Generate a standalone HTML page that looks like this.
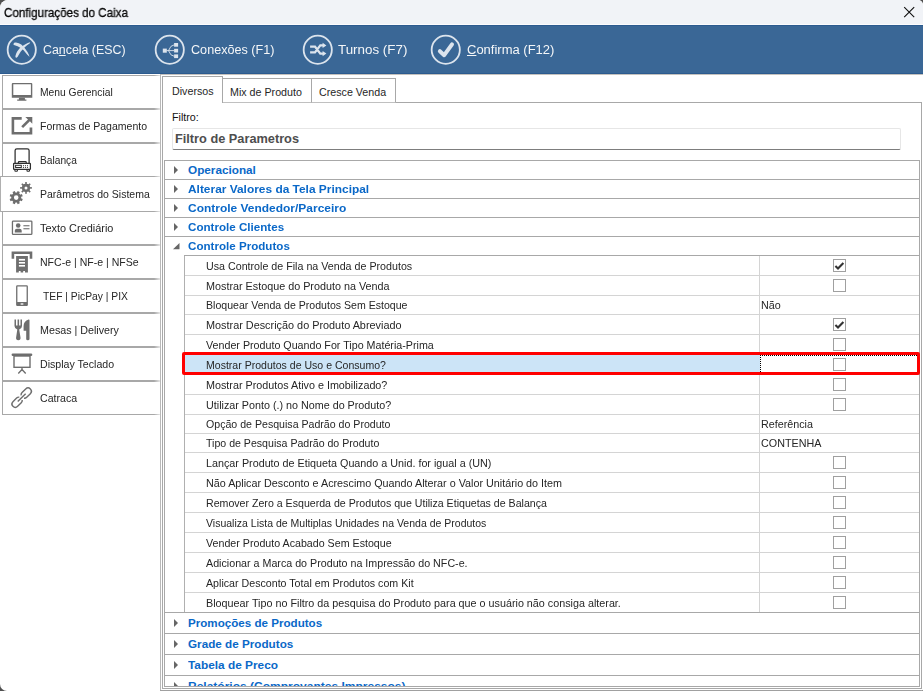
<!DOCTYPE html><html><head><meta charset="utf-8"><style>
*{margin:0;padding:0;box-sizing:border-box}
html,body{width:923px;height:691px;overflow:hidden;background:#505050}
body{font-family:"Liberation Sans",sans-serif;position:relative}
.a{position:absolute}
.t{position:absolute;white-space:nowrap;line-height:1}
#win{position:absolute;left:0;top:0;width:923px;height:691px;background:#fff;border-radius:8px 5px 2px 7px;overflow:hidden}
.hl{position:absolute;height:1px}
.vl{position:absolute;width:1px}
</style></head><body><div id="win">
<div class="a" style="left:0;top:0;width:923px;height:24px;background:#f1f3f7"></div>
<div class="hl" style="left:0;top:24px;width:923px;background:#fcfcfd"></div>
<div class="t" style="left:4px;top:7px;font-size:12.3px;color:#0a0a0a;transform:scaleX(0.944);transform-origin:0 0;will-change:transform;-webkit-text-stroke:0.3px #000">Configurações do Caixa</div>
<svg class="a" style="left:903px;top:6px" width="13" height="13" viewBox="0 0 13 13"><path d="M1.2 1.2L11.2 11.2M11.2 1.2L1.2 11.2" stroke="#111" stroke-width="1.1"/></svg>
<div class="a" style="left:0;top:25px;width:923px;height:49px;background:#3a6796;border-top:1px solid #2c5b8f;border-bottom:1px solid #2c5b8f"></div>
<svg class="a" style="left:0;top:0" width="480" height="75" viewBox="0 0 480 75">
<circle cx="21.75" cy="49.75" r="14.1" fill="none" stroke="#dce4ed" stroke-width="1.8"/>
<path fill="#dce4ed" d="M13.5 44Q13.6 42.5 16 42.6Q19 42.9 21.3 44.6Q24.5 47.5 27.5 52Q29 54.5 29.5 57Q28.5 55.8 27.3 54.8Q25.5 52.5 23.6 50.2Q20.8 47.9 17.6 46.3Q15 45.5 14 45.1Q13.4 44.8 13.5 44Z"/>
<path fill="#dce4ed" d="M30.1 42.3Q27.5 43 25.9 44Q23.5 45 21.7 46.5Q19.8 48 18.5 49.7Q17 51.5 16.2 53.4Q15.3 55.5 15.4 56.8Q15.6 58 16.9 57.6Q18 56.5 18.5 55.3Q19.5 53.5 20.8 51.6Q22.5 49.3 24.5 47.4Q27 45.2 29.6 43.5Q30.4 42.6 30.1 42.3Z"/>
<circle cx="169.75" cy="49.75" r="14.1" fill="none" stroke="#dce4ed" stroke-width="1.8"/>
<g fill="#dce4ed"><rect x="162.8" y="48.6" width="4" height="4.1"/><rect x="174.1" y="43" width="4" height="3.7"/><rect x="174.1" y="48.8" width="4" height="3.7"/><rect x="174.1" y="54.4" width="4" height="3.7"/></g>
<path d="M166.5 50.6H174.3M168.5 50.6Q170.5 45 174.3 44.8M168.5 50.6Q170.5 56.2 174.3 56.3" fill="none" stroke="#dce4ed" stroke-width="0.9"/>
<circle cx="317.75" cy="49.75" r="14.1" fill="none" stroke="#dce4ed" stroke-width="1.8"/>
<path d="M310.1 46.6H315L320.3 53.6H323.5M310.1 52.4H315L320.3 45.4H323.5" fill="none" stroke="#dce4ed" stroke-width="2.3"/>
<path d="M322.6 42.7L326.4 45.4L322.6 48.1ZM322.6 50.9L326.4 53.6L322.6 56.3Z" fill="#dce4ed"/>
<circle cx="445.75" cy="49.75" r="14.1" fill="none" stroke="#dce4ed" stroke-width="1.8"/>
<path d="M439.9 51.2L444.2 55.2L452 44.3" fill="none" stroke="#dce4ed" stroke-width="4" stroke-linecap="round" stroke-linejoin="round"/>
</svg>
<div class="t" style="left:42.5px;top:44px;font-size:12.5px;color:#f4f6f8;transform:scaleX(0.99);transform-origin:0 0">Ca<u>n</u>cela (ESC)</div>
<div class="t" style="left:190.5px;top:44px;font-size:12.5px;color:#f4f6f8;transform:scaleX(1.01);transform-origin:0 0">Conexões (F1)</div>
<div class="t" style="left:338px;top:44px;font-size:12.5px;color:#f4f6f8;transform:scaleX(1.07);transform-origin:0 0">Turnos (F7)</div>
<div class="t" style="left:466.5px;top:44px;font-size:12.5px;color:#f4f6f8;transform:scaleX(1.04);transform-origin:0 0"><u>C</u>onfirma (F12)</div>
<div class="hl" style="left:160px;top:74px;width:763px;background:#c4c1bd"></div>
<div class="vl" style="left:160px;top:74px;height:617px;background:#b8b8b8"></div>
<div class="hl" style="left:2px;top:75px;width:158px;background:linear-gradient(90deg,#a8a8a8 152px,#e6e6e6 158px)"></div>
<div class="hl" style="left:2px;top:108px;width:158px;background:linear-gradient(90deg,#a8a8a8 152px,#e6e6e6 158px)"></div>
<div class="vl" style="left:2px;top:75px;height:34px;background:#a8a8a8"></div>
<div class="hl" style="left:2px;top:109px;width:158px;background:linear-gradient(90deg,#a8a8a8 152px,#e6e6e6 158px)"></div>
<div class="hl" style="left:2px;top:142px;width:158px;background:linear-gradient(90deg,#a8a8a8 152px,#e6e6e6 158px)"></div>
<div class="vl" style="left:2px;top:109px;height:34px;background:#a8a8a8"></div>
<div class="hl" style="left:2px;top:143px;width:158px;background:linear-gradient(90deg,#a8a8a8 152px,#e6e6e6 158px)"></div>
<div class="hl" style="left:2px;top:176px;width:158px;background:linear-gradient(90deg,#a8a8a8 152px,#e6e6e6 158px)"></div>
<div class="vl" style="left:2px;top:143px;height:34px;background:#a8a8a8"></div>
<div class="hl" style="left:2px;top:211px;width:158px;background:linear-gradient(90deg,#a8a8a8 152px,#e6e6e6 158px)"></div>
<div class="hl" style="left:2px;top:244px;width:158px;background:linear-gradient(90deg,#a8a8a8 152px,#e6e6e6 158px)"></div>
<div class="vl" style="left:2px;top:211px;height:34px;background:#a8a8a8"></div>
<div class="hl" style="left:2px;top:245px;width:158px;background:linear-gradient(90deg,#a8a8a8 152px,#e6e6e6 158px)"></div>
<div class="hl" style="left:2px;top:278px;width:158px;background:linear-gradient(90deg,#a8a8a8 152px,#e6e6e6 158px)"></div>
<div class="vl" style="left:2px;top:245px;height:34px;background:#a8a8a8"></div>
<div class="hl" style="left:2px;top:279px;width:158px;background:linear-gradient(90deg,#a8a8a8 152px,#e6e6e6 158px)"></div>
<div class="hl" style="left:2px;top:312px;width:158px;background:linear-gradient(90deg,#a8a8a8 152px,#e6e6e6 158px)"></div>
<div class="vl" style="left:2px;top:279px;height:34px;background:#a8a8a8"></div>
<div class="hl" style="left:2px;top:313px;width:158px;background:linear-gradient(90deg,#a8a8a8 152px,#e6e6e6 158px)"></div>
<div class="hl" style="left:2px;top:346px;width:158px;background:linear-gradient(90deg,#a8a8a8 152px,#e6e6e6 158px)"></div>
<div class="vl" style="left:2px;top:313px;height:34px;background:#a8a8a8"></div>
<div class="hl" style="left:2px;top:347px;width:158px;background:linear-gradient(90deg,#a8a8a8 152px,#e6e6e6 158px)"></div>
<div class="hl" style="left:2px;top:380px;width:158px;background:linear-gradient(90deg,#a8a8a8 152px,#e6e6e6 158px)"></div>
<div class="vl" style="left:2px;top:347px;height:34px;background:#a8a8a8"></div>
<div class="hl" style="left:2px;top:381px;width:158px;background:linear-gradient(90deg,#a8a8a8 152px,#e6e6e6 158px)"></div>
<div class="hl" style="left:2px;top:414px;width:158px;background:linear-gradient(90deg,#a8a8a8 152px,#e6e6e6 158px)"></div>
<div class="vl" style="left:2px;top:381px;height:34px;background:#a8a8a8"></div>
<div class="t" style="left:40px;top:88px;font-size:10.3px;color:#262626;transform:scaleX(1.0);transform-origin:0 0">Menu Gerencial</div>
<div class="t" style="left:40px;top:122px;font-size:10.3px;color:#262626;transform:scaleX(1.022);transform-origin:0 0">Formas de Pagamento</div>
<div class="t" style="left:40px;top:156px;font-size:10.3px;color:#262626;transform:scaleX(0.99);transform-origin:0 0">Balança</div>
<div class="a" style="left:0;top:176px;width:160px;height:36px;background:#fff"></div>
<div class="hl" style="left:0;top:176px;width:160px;background:linear-gradient(90deg,#a8a8a8 154px,#e6e6e6 160px)"></div>
<div class="hl" style="left:0;top:211px;width:160px;background:linear-gradient(90deg,#a8a8a8 154px,#e6e6e6 160px)"></div>
<div class="vl" style="left:0;top:176px;height:36px;background:#b0b0b0"></div>
<div class="t" style="left:40px;top:190px;font-size:10.3px;color:#262626;transform:scaleX(1.02);transform-origin:0 0">Parâmetros do Sistema</div>
<div class="t" style="left:40px;top:224px;font-size:10.3px;color:#262626;transform:scaleX(1.06);transform-origin:0 0">Texto Crediário</div>
<div class="t" style="left:40px;top:258px;font-size:10.3px;color:#262626;transform:scaleX(1.025);transform-origin:0 0">NFC-e | NF-e | NFSe</div>
<div class="t" style="left:43px;top:292px;font-size:10.3px;color:#262626;transform:scaleX(1.0);transform-origin:0 0">TEF | PicPay | PIX</div>
<div class="t" style="left:40px;top:326px;font-size:10.3px;color:#262626;transform:scaleX(1.04);transform-origin:0 0">Mesas | Delivery</div>
<div class="t" style="left:40px;top:360px;font-size:10.3px;color:#262626;transform:scaleX(1.03);transform-origin:0 0">Display Teclado</div>
<div class="t" style="left:40px;top:394px;font-size:10.3px;color:#262626;transform:scaleX(1.03);transform-origin:0 0">Catraca</div>
<svg class="a" style="left:0;top:0" width="160" height="420" viewBox="0 0 160 420">
<g fill="#6e6e6e">
<path fill-rule="evenodd" d="M12.8 83h18.5q1 0 1 1v13.8h-20.5v-13.8q0-1 1-1zM13.3 84.3v10.8h17.6v-10.8z"/>
<path d="M18.9 97.7h6v1.9h1.5v1.2h-9.2v-1.2h1.7z"/>
<path d="M11.6 117.1h10.1v2.6h-7.5v12.3h15.4v-4.6h2.7v7.2h-20.7z"/>
<path d="M25.3 117.1h7v6.6l-2.4-2.4l-6.8 6.8l-1.9-1.9l6.8-6.8z"/>
</g>
<g fill="none" stroke="#2e2e2e" stroke-width="1.25">
<path d="M15.1 163.3v-12.7q0-1.8 1.8-1.8h10.4q1.8 0 1.8 1.8v12.7"/>
<path d="M18.4 163.2v-1q0-0.7 0.7-0.7h6.4q0.7 0 0.7 0.7v1"/>
<rect x="13.6" y="163.4" width="16.8" height="6" rx="0.6"/>
<rect x="15.6" y="165.3" width="5.7" height="2.2" stroke-width="1"/>
<path d="M14.9 169.6v1.1q0 0.6 0.6 0.6h1.3q0.6 0 0.6-0.6v-1.1M27 169.6v1.1q0 0.6 0.6 0.6h1.3q0.6 0 0.6-0.6v-1.1" stroke-width="1.1"/>
</g>
<g fill="#2e2e2e"><circle cx="23.4" cy="165.6" r="0.55"/><circle cx="25.4" cy="165.6" r="0.55"/><circle cx="27.4" cy="165.6" r="0.55"/><circle cx="23.4" cy="167.4" r="0.55"/><circle cx="25.4" cy="167.4" r="0.55"/><circle cx="27.4" cy="167.4" r="0.55"/></g>
<path fill="#6e6e6e" fill-rule="evenodd" d="M21.2,197.6A5.0,5.0 0 1 0 11.2,197.6A5.0,5.0 0 1 0 21.2,197.6ZM18.5,197.6A2.3,2.3 0 1 1 13.899999999999999,197.6A2.3,2.3 0 1 1 18.5,197.6Z"/><rect x="-1.2" y="-6.6" width="2.4" height="2.3999999999999995" fill="#6e6e6e" transform="translate(16.2 197.6) rotate(22.5)"/><rect x="-1.2" y="-6.6" width="2.4" height="2.3999999999999995" fill="#6e6e6e" transform="translate(16.2 197.6) rotate(67.5)"/><rect x="-1.2" y="-6.6" width="2.4" height="2.3999999999999995" fill="#6e6e6e" transform="translate(16.2 197.6) rotate(112.5)"/><rect x="-1.2" y="-6.6" width="2.4" height="2.3999999999999995" fill="#6e6e6e" transform="translate(16.2 197.6) rotate(157.5)"/><rect x="-1.2" y="-6.6" width="2.4" height="2.3999999999999995" fill="#6e6e6e" transform="translate(16.2 197.6) rotate(202.5)"/><rect x="-1.2" y="-6.6" width="2.4" height="2.3999999999999995" fill="#6e6e6e" transform="translate(16.2 197.6) rotate(247.5)"/><rect x="-1.2" y="-6.6" width="2.4" height="2.3999999999999995" fill="#6e6e6e" transform="translate(16.2 197.6) rotate(292.5)"/><rect x="-1.2" y="-6.6" width="2.4" height="2.3999999999999995" fill="#6e6e6e" transform="translate(16.2 197.6) rotate(337.5)"/>
<path fill="#6e6e6e" fill-rule="evenodd" d="M30.1,187.9A4.1,4.1 0 1 0 21.9,187.9A4.1,4.1 0 1 0 30.1,187.9ZM27.5,187.9A1.5,1.5 0 1 1 24.5,187.9A1.5,1.5 0 1 1 27.5,187.9Z"/><rect x="-0.8" y="-5.9" width="1.6" height="2.6000000000000005" fill="#6e6e6e" transform="translate(26.0 187.9) rotate(0.0)"/><rect x="-0.8" y="-5.9" width="1.6" height="2.6000000000000005" fill="#6e6e6e" transform="translate(26.0 187.9) rotate(45.0)"/><rect x="-0.8" y="-5.9" width="1.6" height="2.6000000000000005" fill="#6e6e6e" transform="translate(26.0 187.9) rotate(90.0)"/><rect x="-0.8" y="-5.9" width="1.6" height="2.6000000000000005" fill="#6e6e6e" transform="translate(26.0 187.9) rotate(135.0)"/><rect x="-0.8" y="-5.9" width="1.6" height="2.6000000000000005" fill="#6e6e6e" transform="translate(26.0 187.9) rotate(180.0)"/><rect x="-0.8" y="-5.9" width="1.6" height="2.6000000000000005" fill="#6e6e6e" transform="translate(26.0 187.9) rotate(225.0)"/><rect x="-0.8" y="-5.9" width="1.6" height="2.6000000000000005" fill="#6e6e6e" transform="translate(26.0 187.9) rotate(270.0)"/><rect x="-0.8" y="-5.9" width="1.6" height="2.6000000000000005" fill="#6e6e6e" transform="translate(26.0 187.9) rotate(315.0)"/>
<rect x="12.45" y="221.05" width="19.4" height="13.4" rx="0.8" fill="none" stroke="#6e6e6e" stroke-width="1.3"/>
<circle cx="18.2" cy="225.5" r="2.3" fill="#6e6e6e"/>
<path d="M14.8 232.4v-1.6q0-2 2-2h2.9q2 0 2 2v1.6z" fill="#6e6e6e"/>
<rect x="23.4" y="225.2" width="6.1" height="1.1" fill="#6e6e6e"/>
<rect x="23.4" y="228.2" width="6.1" height="1.1" fill="#6e6e6e"/>
<path d="M11.6 251.4h20.7v7.3h-2.6v-4.8h-15.5v4.8h-2.6z" fill="#6e6e6e"/>
<path d="M16.1 256.1h11.8v16.4h-2.9v-1.5h-1.8v1.5h-2.6v-1.5h-1.8v1.5h-2.7z" fill="#6e6e6e"/>
<g fill="#fff"><rect x="18.9" y="258.9" width="6.1" height="1.7"/><rect x="18.9" y="262" width="6.1" height="1.6"/><rect x="18.9" y="265" width="6.1" height="1.6"/></g>
<path fill="#6e6e6e" fill-rule="evenodd" d="M17.3 285.2h9.4q1.2 0 1.2 1.2v18.3q0 1.2-1.2 1.2h-9.4q-1.2 0-1.2-1.2v-18.3q0-1.2 1.2-1.2zM17.4 286.5v15.5h9.2v-15.5z"/>
<ellipse cx="22" cy="304.1" rx="1.7" ry="0.75" fill="#fff"/>
<path fill="#6e6e6e" d="M14.5 319.6H16V325.6H17.55V319.6H19.1V325.6H20.5V319.6H22V326Q22 328.6 19.2 329.6L20.5 337.5Q20.8 340.3 18.3 340.3Q15.8 340.3 16.1 337.5L17.3 329.6Q14.5 328.6 14.5 326Z"/>
<path fill="#6e6e6e" d="M29.5 320.3V339Q29.5 340.3 27.8 340.3Q26.2 340.3 26.2 339V330.7H23.6V326Q23.6 321.5 28.6 319.6Q29.5 319.4 29.5 320.3Z"/>
<path fill="#6e6e6e" d="M12.8 353.6h18.3q1.2 0 1.2 1.25q0 1.25-1.2 1.25h-18.3q-1.2 0-1.2-1.25q0-1.25 1.2-1.25z"/>
<rect x="14" y="356" width="16" height="11.3" fill="none" stroke="#6e6e6e" stroke-width="1.4"/>
<path d="M22 367.5v2.4M22 369.5l-3.7 4M22 369.5l3.7 4" stroke="#6e6e6e" stroke-width="1.35" fill="none"/>
<g fill="none" stroke="#6e6e6e" stroke-width="1.4" transform="translate(21.66 397.67) rotate(-45)">
<path d="M1.264 -2.05A3.3 3.3 0 0 1 3.85 -3.3L9 -3.3A3.3 3.3 0 0 1 9 3.3L3.85 3.3A3.3 3.3 0 0 1 1.264 2.05"/>
<path d="M-1.264 2.05A3.3 3.3 0 0 1 -3.85 3.3L-9 3.3A3.3 3.3 0 0 1 -9 -3.3L-3.85 -3.3A3.3 3.3 0 0 1 -1.264 -2.05"/>
<path d="M-5.5 0H5.6"/>
</g>
</svg>
<div class="a" style="left:162px;top:102px;width:760px;height:587px;border:1px solid #a8a8a8"></div>
<div class="a" style="left:222px;top:78px;width:91px;height:25px;border:1px solid #a8a8a8;border-bottom-color:#c0c0c0;background:#fff"></div>
<div class="a" style="left:311px;top:78px;width:85px;height:25px;border:1px solid #a8a8a8;border-bottom-color:#c0c0c0;background:#fff"></div>
<div class="a" style="left:162px;top:76px;width:61px;height:27px;border:1px solid #a8a8a8;border-bottom:none;background:#fff"></div>
<div class="t" style="left:172px;top:86px;font-size:10.7px;color:#262626">Diversos</div>
<div class="t" style="left:230px;top:87px;font-size:10.7px;color:#262626">Mix de Produto</div>
<div class="t" style="left:319px;top:87px;font-size:10.7px;color:#262626">Cresce Venda</div>
<div class="t" style="left:172px;top:112px;font-size:10.7px;color:#111">Filtro:</div>
<div class="a" style="left:172px;top:128px;width:729px;height:22px;border:1px solid #e6e6e6;border-bottom:1px solid #7d7d7d;border-radius:2px"></div>
<div class="t" style="left:175px;top:133px;font-size:12.75px;font-weight:bold;color:#4e4e4e">Filtro de Parametros</div>
<div class="a" style="left:164px;top:160px;width:756px;height:527px;border:1px solid #a8a8a8"></div>
<div class="hl" style="left:165px;top:160px;width:754px;background:#a8a8a8"></div><svg class="a" style="left:174px;top:166.0px" width="5" height="8" viewBox="0 0 5 8"><path d="M0 0L4 4L0 8Z" fill="#666"/></svg><div class="t" style="left:188px;top:165px;font-size:11.8px;font-weight:bold;color:#0a68c8;transform:scaleX(0.9956);transform-origin:0 0">Operacional</div>
<div class="hl" style="left:165px;top:179px;width:754px;background:#a8a8a8"></div><svg class="a" style="left:174px;top:185.0px" width="5" height="8" viewBox="0 0 5 8"><path d="M0 0L4 4L0 8Z" fill="#666"/></svg><div class="t" style="left:188px;top:184px;font-size:11.8px;font-weight:bold;color:#0a68c8;transform:scaleX(1.0095);transform-origin:0 0">Alterar Valores da Tela Principal</div>
<div class="hl" style="left:165px;top:198px;width:754px;background:#a8a8a8"></div><svg class="a" style="left:174px;top:204.0px" width="5" height="8" viewBox="0 0 5 8"><path d="M0 0L4 4L0 8Z" fill="#666"/></svg><div class="t" style="left:188px;top:203px;font-size:11.8px;font-weight:bold;color:#0a68c8;transform:scaleX(1.0141);transform-origin:0 0">Controle Vendedor/Parceiro</div>
<div class="hl" style="left:165px;top:217px;width:754px;background:#a8a8a8"></div><svg class="a" style="left:174px;top:223.0px" width="5" height="8" viewBox="0 0 5 8"><path d="M0 0L4 4L0 8Z" fill="#666"/></svg><div class="t" style="left:188px;top:222px;font-size:11.8px;font-weight:bold;color:#0a68c8;transform:scaleX(0.9846);transform-origin:0 0">Controle Clientes</div>
<div class="hl" style="left:165px;top:236px;width:754px;background:#a8a8a8"></div><svg class="a" style="left:172.6px;top:242.8px" width="7" height="7" viewBox="0 0 7 7"><path d="M6.5 0V6.3H0Z" fill="#666"/></svg><div class="t" style="left:188px;top:241px;font-size:11.8px;font-weight:bold;color:#0a68c8;transform:scaleX(0.9836);transform-origin:0 0">Controle Produtos</div>
<div class="vl" style="left:184px;top:255px;height:357px;background:#b0b0b0"></div>
<div class="hl" style="left:184px;top:255px;width:735px;background:#a8a8a8"></div>
<div class="vl" style="left:759px;top:256px;height:356px;background:#d4d4d4"></div>
<div class="t" style="left:206px;top:261px;font-size:10.75px;color:#262626;transform:scaleX(0.9942);transform-origin:0 0">Usa Controle de Fila na Venda de Produtos</div>
<div class="a" style="left:833px;top:259px;width:13px;height:13px;border:1px solid #a0a0a0;background:#fff"></div>
<svg class="a" style="left:833px;top:259px" width="13" height="13" viewBox="0 0 13 13"><path d="M2.4 7.1L5 9.6L10.4 4.1" fill="none" stroke="#333" stroke-width="2.1"/></svg>
<div class="hl" style="left:185px;top:275px;width:734px;background:#d4d4d4"></div>
<div class="t" style="left:206px;top:281px;font-size:10.75px;color:#262626;transform:scaleX(1.0038);transform-origin:0 0">Mostrar Estoque do Produto na Venda</div>
<div class="a" style="left:833px;top:279px;width:13px;height:13px;border:1px solid #a0a0a0;background:#fff"></div>
<div class="hl" style="left:185px;top:295px;width:734px;background:#d4d4d4"></div>
<div class="t" style="left:206px;top:300px;font-size:10.75px;color:#262626;transform:scaleX(0.9824);transform-origin:0 0">Bloquear Venda de Produtos Sem Estoque</div>
<div class="t" style="left:761px;top:300px;font-size:10.75px;color:#262626">Não</div>
<div class="hl" style="left:185px;top:314px;width:734px;background:#d4d4d4"></div>
<div class="t" style="left:206px;top:320px;font-size:10.75px;color:#262626;transform:scaleX(1.0099);transform-origin:0 0">Mostrar Descrição do Produto Abreviado</div>
<div class="a" style="left:833px;top:318px;width:13px;height:13px;border:1px solid #a0a0a0;background:#fff"></div>
<svg class="a" style="left:833px;top:318px" width="13" height="13" viewBox="0 0 13 13"><path d="M2.4 7.1L5 9.6L10.4 4.1" fill="none" stroke="#333" stroke-width="2.1"/></svg>
<div class="hl" style="left:185px;top:334px;width:734px;background:#d4d4d4"></div>
<div class="t" style="left:206px;top:340px;font-size:10.75px;color:#262626;transform:scaleX(0.9952);transform-origin:0 0">Vender Produto Quando For Tipo Matéria-Prima</div>
<div class="a" style="left:833px;top:338px;width:13px;height:13px;border:1px solid #a0a0a0;background:#fff"></div>
<div class="hl" style="left:185px;top:354px;width:734px;background:#d4d4d4"></div>
<div class="a" style="left:185px;top:355px;width:575px;height:19px;background:#cce4f7"></div>
<div class="a" style="left:760px;top:355px;width:159px;height:19px;border-left:1px dotted #000;border-top:1px dotted #000"></div>
<div class="t" style="left:206px;top:360px;font-size:10.75px;color:#262626;transform:scaleX(0.9809);transform-origin:0 0">Mostrar Produtos de Uso e Consumo?</div>
<div class="a" style="left:833px;top:358px;width:13px;height:13px;border:1px solid #a0a0a0;background:#fff"></div>
<div class="hl" style="left:185px;top:374px;width:734px;background:#d4d4d4"></div>
<div class="t" style="left:206px;top:380px;font-size:10.75px;color:#262626;transform:scaleX(1.0017);transform-origin:0 0">Mostrar Produtos Ativo e Imobilizado?</div>
<div class="a" style="left:833px;top:378px;width:13px;height:13px;border:1px solid #a0a0a0;background:#fff"></div>
<div class="hl" style="left:185px;top:394px;width:734px;background:#d4d4d4"></div>
<div class="t" style="left:206px;top:400px;font-size:10.75px;color:#262626;transform:scaleX(1.0);transform-origin:0 0">Utilizar Ponto (.) no Nome do Produto?</div>
<div class="a" style="left:833px;top:398px;width:13px;height:13px;border:1px solid #a0a0a0;background:#fff"></div>
<div class="hl" style="left:185px;top:414px;width:734px;background:#d4d4d4"></div>
<div class="t" style="left:206px;top:419px;font-size:10.75px;color:#262626;transform:scaleX(0.9861);transform-origin:0 0">Opção de Pesquisa Padrão do Produto</div>
<div class="t" style="left:761px;top:419px;font-size:10.75px;color:#262626">Referência</div>
<div class="hl" style="left:185px;top:433px;width:734px;background:#d4d4d4"></div>
<div class="t" style="left:206px;top:438px;font-size:10.75px;color:#262626;transform:scaleX(0.9852);transform-origin:0 0">Tipo de Pesquisa Padrão do Produto</div>
<div class="t" style="left:761px;top:438px;font-size:10.75px;color:#262626">CONTENHA</div>
<div class="hl" style="left:185px;top:452px;width:734px;background:#d4d4d4"></div>
<div class="t" style="left:206px;top:458px;font-size:10.75px;color:#262626;transform:scaleX(1.0011);transform-origin:0 0">Lançar Produto de Etiqueta Quando a Unid. for igual a (UN)</div>
<div class="a" style="left:833px;top:456px;width:13px;height:13px;border:1px solid #a0a0a0;background:#fff"></div>
<div class="hl" style="left:185px;top:472px;width:734px;background:#d4d4d4"></div>
<div class="t" style="left:206px;top:478px;font-size:10.75px;color:#262626;transform:scaleX(1.002);transform-origin:0 0">Não Aplicar Desconto e Acrescimo Quando Alterar o Valor Unitário do Item</div>
<div class="a" style="left:833px;top:476px;width:13px;height:13px;border:1px solid #a0a0a0;background:#fff"></div>
<div class="hl" style="left:185px;top:492px;width:734px;background:#d4d4d4"></div>
<div class="t" style="left:206px;top:498px;font-size:10.75px;color:#262626;transform:scaleX(0.987);transform-origin:0 0">Remover Zero a Esquerda de Produtos que Utiliza Etiquetas de Balança</div>
<div class="a" style="left:833px;top:496px;width:13px;height:13px;border:1px solid #a0a0a0;background:#fff"></div>
<div class="hl" style="left:185px;top:512px;width:734px;background:#d4d4d4"></div>
<div class="t" style="left:206px;top:518px;font-size:10.75px;color:#262626;transform:scaleX(0.978);transform-origin:0 0">Visualiza Lista de Multiplas Unidades na Venda de Produtos</div>
<div class="a" style="left:833px;top:516px;width:13px;height:13px;border:1px solid #a0a0a0;background:#fff"></div>
<div class="hl" style="left:185px;top:532px;width:734px;background:#d4d4d4"></div>
<div class="t" style="left:206px;top:538px;font-size:10.75px;color:#262626;transform:scaleX(0.9925);transform-origin:0 0">Vender Produto Acabado Sem Estoque</div>
<div class="a" style="left:833px;top:536px;width:13px;height:13px;border:1px solid #a0a0a0;background:#fff"></div>
<div class="hl" style="left:185px;top:552px;width:734px;background:#d4d4d4"></div>
<div class="t" style="left:206px;top:558px;font-size:10.75px;color:#262626;transform:scaleX(0.995);transform-origin:0 0">Adicionar a Marca do Produto na Impressão do NFC-e.</div>
<div class="a" style="left:833px;top:556px;width:13px;height:13px;border:1px solid #a0a0a0;background:#fff"></div>
<div class="hl" style="left:185px;top:572px;width:734px;background:#d4d4d4"></div>
<div class="t" style="left:206px;top:578px;font-size:10.75px;color:#262626;transform:scaleX(0.9909);transform-origin:0 0">Aplicar Desconto Total em Produtos com Kit</div>
<div class="a" style="left:833px;top:576px;width:13px;height:13px;border:1px solid #a0a0a0;background:#fff"></div>
<div class="hl" style="left:185px;top:592px;width:734px;background:#d4d4d4"></div>
<div class="t" style="left:206px;top:598px;font-size:10.75px;color:#262626;transform:scaleX(1.0017);transform-origin:0 0">Bloquear Tipo no Filtro da pesquisa do Produto para que o usuário não consiga alterar.</div>
<div class="a" style="left:833px;top:596px;width:13px;height:13px;border:1px solid #a0a0a0;background:#fff"></div>
<div class="hl" style="left:165px;top:612px;width:754px;background:#a8a8a8"></div><svg class="a" style="left:174px;top:619.0px" width="5" height="8" viewBox="0 0 5 8"><path d="M0 0L4 4L0 8Z" fill="#666"/></svg><div class="t" style="left:188px;top:618px;font-size:11.8px;font-weight:bold;color:#0a68c8;transform:scaleX(0.9838);transform-origin:0 0">Promoções de Produtos</div>
<div class="hl" style="left:165px;top:633px;width:754px;background:#a8a8a8"></div><svg class="a" style="left:174px;top:640.0px" width="5" height="8" viewBox="0 0 5 8"><path d="M0 0L4 4L0 8Z" fill="#666"/></svg><div class="t" style="left:188px;top:639px;font-size:11.8px;font-weight:bold;color:#0a68c8;transform:scaleX(0.9915);transform-origin:0 0">Grade de Produtos</div>
<div class="hl" style="left:165px;top:654px;width:754px;background:#a8a8a8"></div><svg class="a" style="left:174px;top:661.0px" width="5" height="8" viewBox="0 0 5 8"><path d="M0 0L4 4L0 8Z" fill="#666"/></svg><div class="t" style="left:188px;top:660px;font-size:11.8px;font-weight:bold;color:#0a68c8;transform:scaleX(1.0045);transform-origin:0 0">Tabela de Preco</div>
<div class="hl" style="left:165px;top:675px;width:754px;background:#a8a8a8"></div><svg class="a" style="left:174px;top:682.0px" width="5" height="8" viewBox="0 0 5 8"><path d="M0 0L4 4L0 8Z" fill="#666"/></svg><div class="t" style="left:188px;top:681px;font-size:11.8px;font-weight:bold;color:#0a68c8;transform:scaleX(1.0179);transform-origin:0 0">Relatórios (Comprovantes Impressos)</div>
<div class="hl" style="left:164px;top:686px;width:756px;background:#a8a8a8"></div>
<div class="a" style="left:161px;top:687px;width:762px;height:4px;background:#fff"></div>
<div class="hl" style="left:162px;top:688px;width:760px;background:#a8a8a8"></div>
<div class="vl" style="left:921px;top:686px;height:3px;background:#a8a8a8"></div>
<div class="vl" style="left:162px;top:686px;height:3px;background:#a8a8a8"></div>
<div class="hl" style="left:160px;top:690px;width:763px;background:#a0a0a0"></div>
<div class="a" style="left:182px;top:352px;width:738px;height:23px;border:3px solid #ff0000;border-radius:2px"></div>
</div></body></html>
